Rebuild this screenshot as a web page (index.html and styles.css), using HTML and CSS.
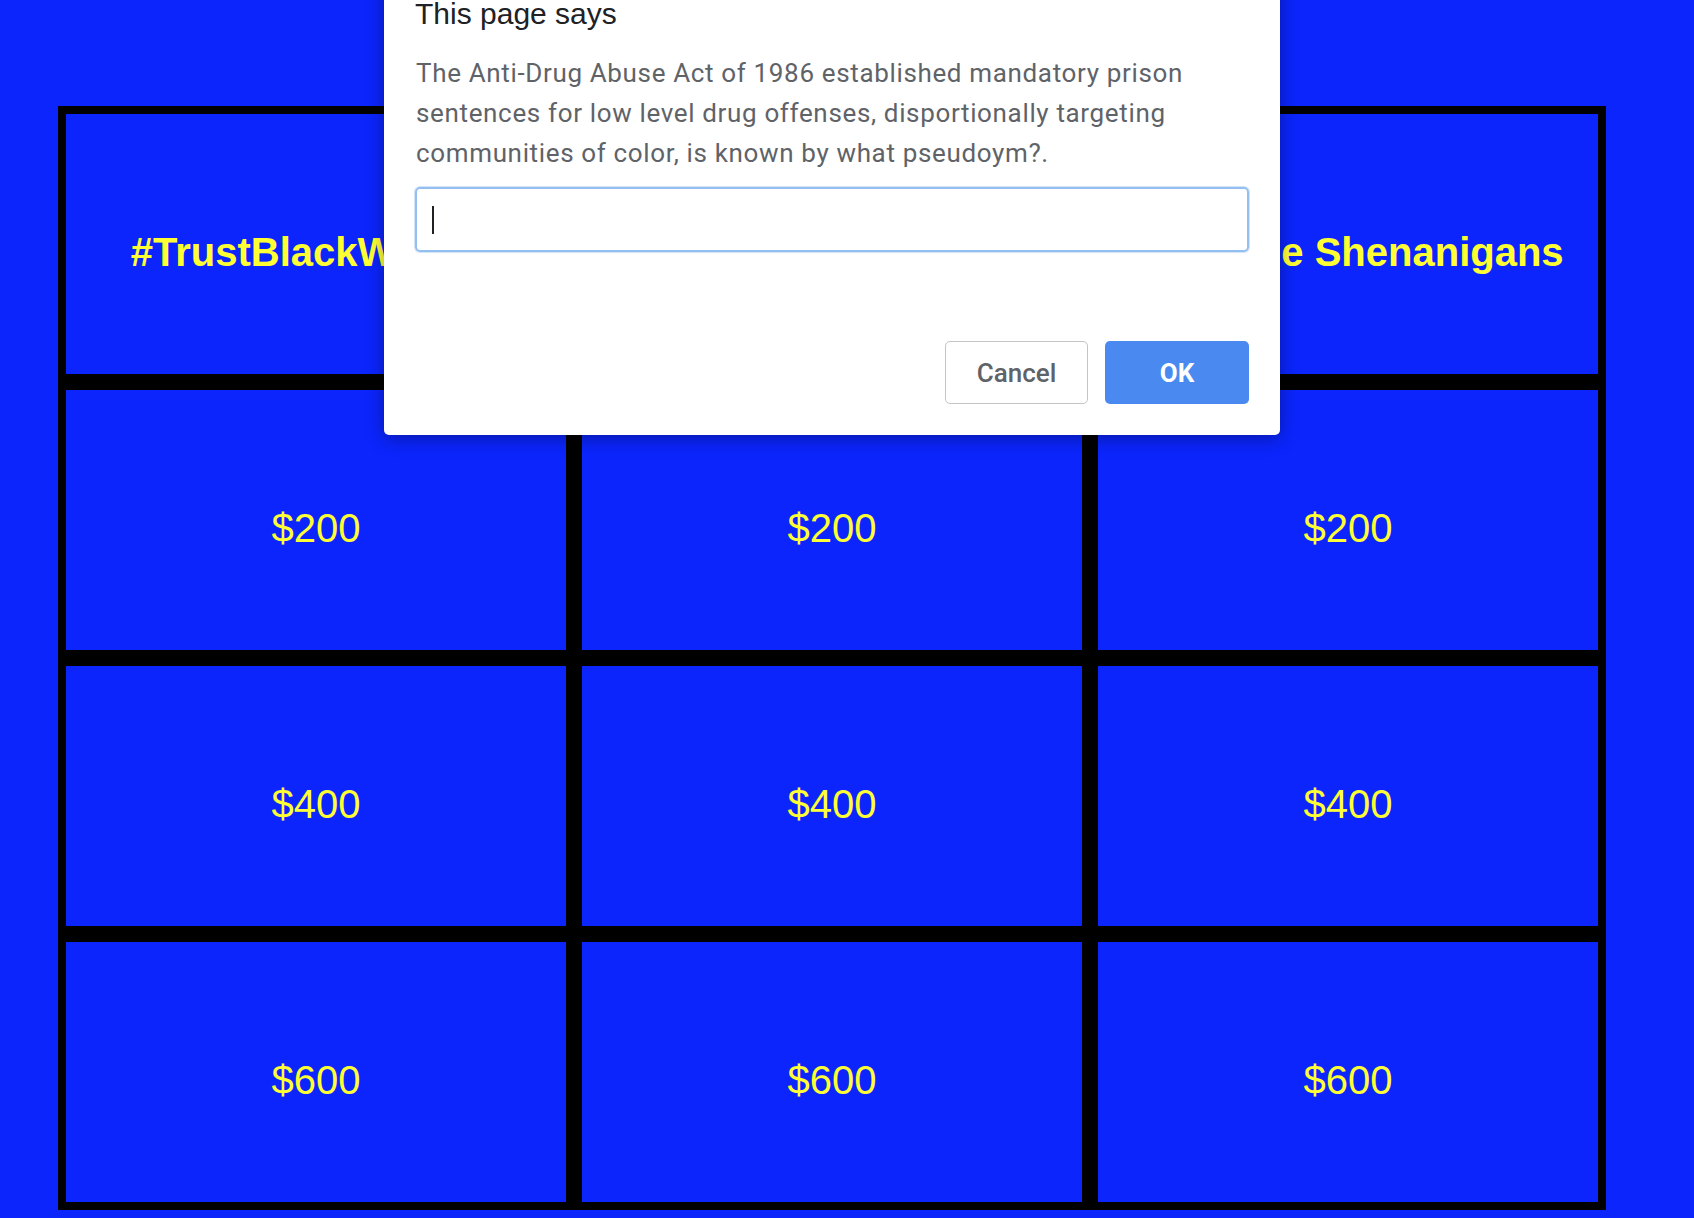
FILE: index.html
```html
<!DOCTYPE html>
<html lang="en">
<head>
<meta charset="utf-8">
<title>Jeopardy</title>
<link rel="stylesheet" href="styles.css">
</head>
<body>
<main class="board">
  <div class="cell head">#TrustBlackWomen</div>
  <div class="cell head">Mass Incarceration</div>
  <div class="cell head">Supreme Shenanigans</div>
  <div class="cell">$200</div>
  <div class="cell">$200</div>
  <div class="cell">$200</div>
  <div class="cell">$400</div>
  <div class="cell">$400</div>
  <div class="cell">$400</div>
  <div class="cell">$600</div>
  <div class="cell">$600</div>
  <div class="cell">$600</div>
</main>
<div class="dialog" role="dialog">
  <h1 class="dialog-title">This page says</h1>
  <p class="dialog-msg">The Anti-Drug Abuse Act of 1986 established mandatory prison<br>sentences for low level drug offenses, disportionally targeting<br>communities of color, is known by what pseudoym?.</p>
  <div class="prompt-input"><span class="caret"></span></div>
  <div class="dialog-actions">
    <button class="btn btn-cancel">Cancel</button>
    <button class="btn btn-ok">OK</button>
  </div>
</div>
</body>
</html>
```

FILE: styles.css
```css
html, body {
  margin: 0;
  padding: 0;
  background: #0b25fc;
  height: 100%;
  overflow: hidden;
}

body {
  position: relative;
  font-family: "Liberation Sans", Arial, sans-serif;
}

.board {
  display: grid;
  grid-template-columns: repeat(3, 516px);
  grid-template-rows: repeat(4, 276px);
  margin: 106px 0 0 58px;
  width: 1548px;
}

.cell {
  box-sizing: border-box;
  border: 8px solid #000;
  padding-top: 16px;
  display: flex;
  align-items: center;
  justify-content: center;
  background: #0b25fc;
  color: #ffff33;
  font-size: 40px;
  white-space: nowrap;
}

.cell.head {
  font-weight: bold;
}

.dialog {
  position: absolute;
  left: 384px;
  top: -24px;
  width: 896px;
  box-sizing: border-box;
  padding: 20px 31px 31px;
  background: #fff;
  border-radius: 0 0 5px 5px;
  box-shadow: 0 3px 18px rgba(0, 0, 0, 0.35);
}

.dialog-title {
  margin: 0;
  font-family: "Liberation Sans", Arial, sans-serif;
  font-weight: normal;
  font-size: 30px;
  line-height: 36px;
  color: #202124;
}

.dialog-msg {
  margin: 21px 0 0 1px;
  font-family: Roboto, "Liberation Sans", sans-serif;
  font-size: 26px;
  letter-spacing: 0.65px;
  line-height: 40px;
  color: #5f6368;
  white-space: nowrap;
}

.prompt-input {
  margin-top: 14px;
  height: 65px;
  box-sizing: border-box;
  border: 2px solid #93bff1;
  border-radius: 5px;
  box-shadow: 0 0 0 1px #d3e4f9;
  padding-left: 15px;
  display: flex;
  align-items: center;
}

.caret {
  display: block;
  width: 2px;
  height: 28px;
  background: #202124;
}

.dialog-actions {
  margin-top: 89px;
  display: flex;
  justify-content: flex-end;
  gap: 17px;
}

.btn {
  height: 63px;
  box-sizing: border-box;
  border-radius: 5px;
  font-family: Roboto, "Liberation Sans", sans-serif;
  font-size: 26px;
  font-weight: 500;
  padding: 0;
  cursor: pointer;
}

.btn-cancel {
  width: 143px;
  background: #fff;
  border: 1px solid #c4c4c4;
  color: #5f6368;
}

.btn-ok {
  width: 144px;
  background: #4a8af0;
  border: none;
  color: #fff;
  font-weight: 700;
}
```
